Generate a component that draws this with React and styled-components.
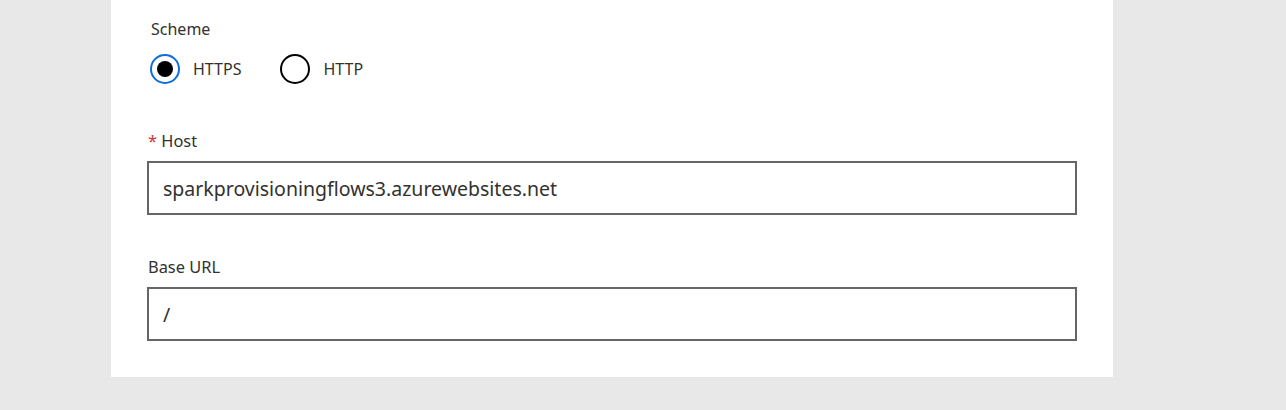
import React, { useState } from "react";
import styled, { createGlobalStyle } from "styled-components";

const GlobalStyle = createGlobalStyle`
  html, body {
    margin: 0;
    padding: 0;
    background: #e8e8e8;
  }
  body {
    font-family: "Noto Sans", "Open Sans", sans-serif;
    color: #323130;
  }
`;

export default function App() {
  const [scheme, setScheme] = useState("https");

  return (
    <Page>
      <GlobalStyle />
      <Panel>
        <SchemeBlock>
          <Label>Scheme</Label>
          <RadioRow>
            <RadioOption onClick={() => setScheme("https")}>
              <Circle $checked={scheme === "https"} />
              <OptionText>HTTPS</OptionText>
            </RadioOption>
            <RadioOption onClick={() => setScheme("http")}>
              <Circle $checked={scheme === "http"} />
              <OptionText>HTTP</OptionText>
            </RadioOption>
          </RadioRow>
        </SchemeBlock>

        <Field>
          <FieldLabel>
            <Required>*</Required> Host
          </FieldLabel>
          <Input defaultValue="sparkprovisioningflows3.azurewebsites.net" />
        </Field>

        <Field>
          <FieldLabel>Base URL</FieldLabel>
          <Input defaultValue="/" />
        </Field>
      </Panel>
    </Page>
  );
}

const Page = styled.div`
  width: 1286px;
  height: 410px;
  background: #e8e8e8;
  padding-left: 111px;
  box-sizing: border-box;
`;

const Panel = styled.div`
  width: 1002px;
  height: 377px;
  background: #fff;
  box-sizing: border-box;
  padding: 18px 36px 0 36px;
  display: flex;
  flex-direction: column;
`;

const SchemeBlock = styled.div`
  display: flex;
  flex-direction: column;
  padding-left: 3px;
  gap: 14px;
`;

const Label = styled.div`
  font-size: 16px;
  line-height: 22px;
  padding-left: 1px;
`;

const RadioRow = styled.div`
  display: flex;
  align-items: center;
  gap: 39px;
`;

const RadioOption = styled.label`
  display: flex;
  align-items: center;
  gap: 13px;
  cursor: pointer;
`;

const Circle = styled.span`
  width: 30px;
  height: 30px;
  box-sizing: border-box;
  border-radius: 50%;
  border: 2px solid ${(p) => (p.$checked ? "#0f6cde" : "#000")};
  display: flex;
  align-items: center;
  justify-content: center;

  &::after {
    content: "";
    display: ${(p) => (p.$checked ? "block" : "none")};
    width: 16px;
    height: 16px;
    border-radius: 50%;
    background: #000;
  }
`;

const OptionText = styled.span`
  font-size: 16px;
  line-height: 22px;
`;

const Field = styled.div`
  display: flex;
  flex-direction: column;
  gap: 9px;
  margin-top: 46px;

  & + & {
    margin-top: 41px;
  }
`;

const FieldLabel = styled.div`
  font-size: 16.4px;
  line-height: 22px;
  padding-left: 1px;
`;

const Required = styled.span`
  color: #d13438;
`;

const Input = styled.input`
  width: 930px;
  height: 54px;
  box-sizing: border-box;
  border: 2px solid #666;
  border-radius: 0;
  padding: 0 14px;
  font-family: "Noto Sans", "Open Sans", sans-serif;
  font-size: 19.5px;
  color: #323130;
  outline: none;
`;
